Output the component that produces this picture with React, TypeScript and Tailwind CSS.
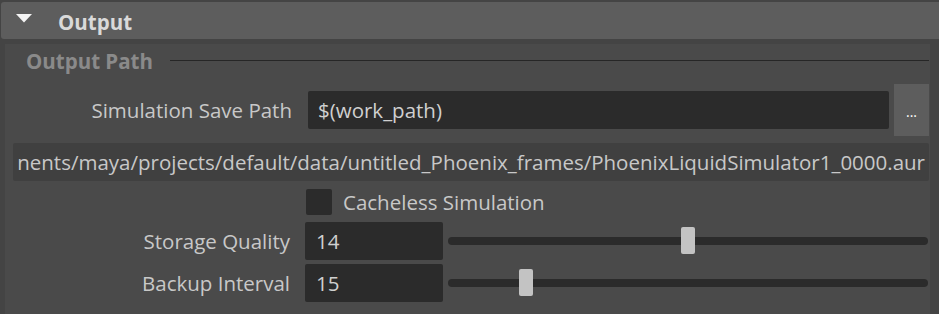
import React from 'react';

const FONT = { fontFamily: '"Open Sans", "Noto Sans", sans-serif' };

const Slider: React.FC<{ pos: number }> = ({ pos }) => (
  <div className="relative ml-[5px] h-[38px] w-[480px] flex items-center">
    <div className="h-[8px] w-full rounded-full bg-[#2b2b2b]" />
    <div
      className="absolute top-[5px] h-[27px] w-[14px] rounded-[2px] bg-[#c3c3c3]"
      style={{ left: pos }}
    />
  </div>
);

const NumRow: React.FC<{ label: string; value: string; pos: number; className?: string }> = ({
  label,
  value,
  pos,
  className = '',
}) => (
  <div className={`flex items-center h-[38px] ${className}`}>
    <div className="w-[285px] text-right text-[#c8c8c8]">{label}</div>
    <div className="ml-[15px] h-[38px] w-[138px] rounded-[2px] bg-[#2b2b2b] pl-[11px] flex items-center text-[#d0d0d0]">
      {value}
    </div>
    <Slider pos={pos} />
  </div>
);

export default function App() {
  return (
    <div
      className="w-[939px] h-[314px] overflow-hidden bg-[#444444] pt-[2px] flex flex-col text-[20.5px] leading-none"
      style={FONT}
    >
      {/* section header */}
      <div className="ml-[1px] h-[37px] shrink-0 rounded-l-[3px] bg-[#5d5d5d] flex items-center">
        <svg width="16" height="9" viewBox="0 0 16 9" className="ml-[15px] mb-[4px]">
          <polygon points="0,0 16,0 8,8.5" fill="#f4f4f4" />
        </svg>
        <span className="ml-[26px] mt-[4px] font-bold text-[#d9d9d9]">Output</span>
      </div>

      <div className="mt-[5px] ml-[5px] w-[925px] flex-1 bg-[#4a4a4a]">
        {/* group title */}
        <div className="h-[32px] flex items-center">
          <span className="ml-[21px] mt-[3px] font-bold text-[#8a8a8a]">Output Path</span>
          <div className="ml-[17px] mr-[1px] flex-1 h-[1px] bg-[#262626]" />
        </div>

        {/* save path */}
        <div className="mt-[8px] h-[52px] flex items-center">
          <div className="w-[287px] text-right text-[#c8c8c8]">Simulation Save Path</div>
          <div className="ml-[16px] h-[38px] w-[581px] rounded-[2px] bg-[#2b2b2b] pl-[10px] flex items-center text-[#d0d0d0]">
            $(work_path)
          </div>
          <button className="ml-[5px] h-[52px] w-[35px] bg-[#5d5d5d] text-white text-[14px] flex items-end justify-center pb-[17px]">
            ...
          </button>
        </div>

        {/* resolved path */}
        <div className="mt-[7px] ml-[8px] mr-[1px] h-[38px] rounded-[2px] bg-[#404040] flex items-center justify-end overflow-hidden whitespace-nowrap pr-[4px] text-[#c8c8c8]">
          nents/maya/projects/default/data/untitled_Phoenix_frames/PhoenixLiquidSimulator1_0000.aur
        </div>

        {/* checkbox */}
        <div className="mt-[8px] h-[26px] flex items-center">
          <div className="ml-[301px] h-[26px] w-[26px] rounded-[2px] bg-[#2b2b2b]" />
          <span className="ml-[11px] text-[#c8c8c8]">Cacheless Simulation</span>
        </div>

        <NumRow label="Storage Quality" value="14" pos={233} className="mt-[7px]" />
        <NumRow label="Backup Interval" value="15" pos={71} className="mt-[4px]" />
      </div>
    </div>
  );
}
